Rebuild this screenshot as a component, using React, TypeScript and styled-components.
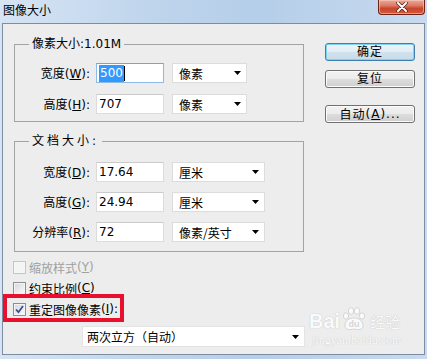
import React from "react";
import styled, { createGlobalStyle } from "styled-components";

const Global = createGlobalStyle`
  html, body { margin: 0; padding: 0; background: #c4d8ee; }
  body {
    font-family: "DejaVu Sans", "Noto Sans CJK SC", sans-serif;
    font-size: 12px;
    color: #000;
  }
`;

const Window = styled.div`
  width: 427px;
  height: 359px;
  box-sizing: border-box;
  display: flex;
  flex-direction: column;
  padding: 0 2px 4px 2px;
  overflow: hidden;
  background: linear-gradient(90deg, #d6e4f4 0%, #bfd5ec 35%, #b5cee9 60%, #c7daef 100%);
`;

const TitleBar = styled.div`
  height: 23px;
  flex: none;
  display: flex;
  justify-content: space-between;
  align-items: flex-start;
`;

const Title = styled.div`
  font-family: "Noto Sans CJK SC", sans-serif;
  font-size: 12px;
  line-height: 14px;
  padding: 3px 0 0 1px;
`;

const CloseBtn = styled.div`
  width: 47px;
  height: 15px;
  box-sizing: border-box;
  border: 1px solid #6e2317;
  border-top: none;
  border-radius: 0 0 4px 4px;
  background: linear-gradient(#e9a998 0%, #dd7a63 40%, #c9452b 60%, #d45a3c 100%);
  box-shadow: inset 0 0 0 1px rgba(255, 210, 200, 0.55);
  display: flex;
  align-items: center;
  justify-content: center;
`;

const Client = styled.div`
  flex: 1;
  position: relative;
  display: flex;
  gap: 19px;
  padding: 13px 0 0 11px;
  background: #ededed;
  border: 1px solid #7d8da1;
`;

const LeftCol = styled.div`
  width: 292px;
  display: flex;
  flex-direction: column;
`;

const RightCol = styled.div`
  display: flex;
  flex-direction: column;
  padding-top: 6px;
`;

const Group = styled.fieldset<{ $pt: number; $pb: number; $gap: number }>`
  width: 290px;
  box-sizing: border-box;
  margin: 0;
  border: 1px solid #a3a3a3;
  padding: ${(p) => p.$pt}px 0 ${(p) => p.$pb}px 0;
  display: flex;
  flex-direction: column;
  gap: ${(p) => p.$gap}px;
  & + & {
    margin-top: 12px;
  }
`;

const Legend = styled.legend<{ $spacing?: number }>`
  margin-left: 14px;
  padding: 0 3px;
  font-size: 12px;
  line-height: 14px;
  height: 14px;
  letter-spacing: ${(p) => p.$spacing ?? 0}px;
`;

const Row = styled.div`
  display: flex;
  align-items: center;
  height: 20px;
`;

const Label = styled.div`
  width: 75px;
  text-align: right;
  margin-right: 6px;
  white-space: nowrap;
  line-height: 14px;
`;

const Input = styled.div<{ $w: number; $focus?: boolean }>`
  width: ${(p) => p.$w}px;
  height: 20px;
  box-sizing: border-box;
  background: #fff;
  border: 1px solid ${(p) => (p.$focus ? "#8cbbe6" : "#dcdcdc")};
  border-top-color: ${(p) => (p.$focus ? "#6fa6dc" : "#cbcbcb")};
  padding-left: 2px;
  display: flex;
  align-items: center;
  margin-right: 8px;
  white-space: nowrap;
`;

const Selected = styled.span`
  background: #3399ff;
  color: #fff;
  padding: 1px 1px;
  line-height: 15px;
`;

const Caret = styled.span`
  display: inline-block;
  width: 1px;
  height: 15px;
  background: #000;
`;

const Select = styled.div<{ $w: number }>`
  width: ${(p) => p.$w}px;
  height: 20px;
  box-sizing: border-box;
  background: #fff;
  border: 1px solid #dcdcdc;
  display: flex;
  align-items: center;
  justify-content: space-between;
  padding: 0 4px 0 6px;
  white-space: nowrap;
`;

const Arrow = () => (
  <svg width="8" height="4" viewBox="0 0 8 4">
    <polygon points="0,0 7,0 3.5,4" fill="#000" />
  </svg>
);

const Btn = styled.div<{ $primary?: boolean; $mt: number }>`
  width: 90px;
  height: 18px;
  box-sizing: border-box;
  margin-top: ${(p) => p.$mt}px;
  border: 1px solid ${(p) => (p.$primary ? "#3c7fb1" : "#707070")};
  border-radius: 3px;
  background: ${(p) =>
    p.$primary
      ? "linear-gradient(#eef5fa 0%, #e1ecf4 50%, #d1e2ee 51%, #c7dbea 100%)"
      : "linear-gradient(#f2f2f2 0%, #ebebeb 50%, #dddddd 51%, #cfcfcf 100%)"};
  box-shadow: inset 0 0 0 1px ${(p) => (p.$primary ? "#7fd3f5" : "#fbfbfb")};
  display: flex;
  align-items: center;
  justify-content: center;
  font-size: 12px;
  line-height: 14px;
  letter-spacing: 1px;
`;

const Checks = styled.div`
  display: flex;
  flex-direction: column;
  margin-top: 5px;
`;

const CheckRow = styled.div<{ $disabled?: boolean }>`
  display: flex;
  align-items: center;
  height: 20px;
  margin-left: -1px;
  color: ${(p) => (p.$disabled ? "#a0a0a0" : "#000")};
  & + & {
    margin-top: 1px;
  }
`;

const Box = styled.span<{ $disabled?: boolean }>`
  width: 13px;
  height: 13px;
  box-sizing: border-box;
  border: 1px solid ${(p) => (p.$disabled ? "#c4c4c4" : "#8e8f8f")};
  background: ${(p) =>
    p.$disabled ? "#f4f4f4" : "linear-gradient(135deg, #d4d6da 0%, #f1f1f1 70%, #fafafa 100%)"};
  box-shadow: inset 0 0 0 1px ${(p) => (p.$disabled ? "#f7f7f7" : "#f4f4f4")};
  margin-right: 3px;
  display: flex;
  align-items: center;
  justify-content: center;
`;

const Resample = styled.div`
  margin: 7px 0 0 68px;
  width: 223px;
  height: 21px;
  box-sizing: border-box;
  background: #fff;
  border: 1px solid #e4e4e4;
  display: flex;
  align-items: center;
  justify-content: space-between;
  padding: 0 4px 0 4px;
  font-family: "Noto Sans CJK SC", sans-serif;
`;

const Highlight = styled.div`
  position: absolute;
  left: 0;
  top: 270px;
  width: 121px;
  height: 28px;
  box-sizing: border-box;
  border: 4px solid #e8102c;
  pointer-events: none;
`;

const Watermark = styled.div`
  position: absolute;
  left: 306px;
  top: 283px;
  display: flex;
  flex-direction: column;
  align-items: flex-start;
  color: #fff;
  opacity: 0.75;
`;

const MarkTop = styled.div`
  display: flex;
  align-items: flex-end;
  gap: 1px;
`;

const Bai = styled.span`
  font-family: "Liberation Sans", sans-serif;
  font-weight: bold;
  font-size: 20px;
  line-height: 20px;
  text-shadow: 0 0 1px #bdbdbd, 0 0 1px #bdbdbd;
`;

const Jy = styled.span`
  font-family: "Noto Sans CJK SC", sans-serif;
  font-size: 15px;
  line-height: 18px;
  margin-left: 2px;
  text-shadow: 0 0 1px #bdbdbd, 0 0 1px #bdbdbd;
`;

const MarkUrl = styled.div`
  font-family: "Liberation Serif", serif;
  font-size: 12px;
  line-height: 12px;
  margin-top: 3px;
  margin-left: 3px;
  text-shadow: 0 0 1px #c4c4c4, 0 0 1px #c4c4c4;
`;

const Cjk = styled.span`
  font-family: "Noto Sans CJK SC", sans-serif;
`;

const Paw = () => (
  <svg width="26" height="24" viewBox="0 0 26 24">
    <g fill="#fff" stroke="#c2c2c2" strokeWidth="0.8">
      <ellipse cx="5" cy="9" rx="2.6" ry="3.2" />
      <ellipse cx="10" cy="4" rx="2.6" ry="3.4" />
      <ellipse cx="16" cy="4" rx="2.6" ry="3.4" />
      <ellipse cx="21" cy="9" rx="2.6" ry="3.2" />
      <path d="M4 19 C4 13 9 11 13 11 C17 11 22 13 22 19 C22 23 17 23 13 22 C9 23 4 23 4 19 Z" />
    </g>
    <text x="13" y="20" textAnchor="middle" fontFamily="Liberation Sans, sans-serif" fontWeight="bold" fontSize="9" fill="#d0d0d0">
      du
    </text>
  </svg>
);

const Check = () => (
  <svg width="9" height="9" viewBox="0 0 9 9">
    <path d="M1 4.5 L3.5 7.2 L8 1" fill="none" stroke="#3b4f8a" strokeWidth="1.8" />
  </svg>
);

const CloseX = () => (
  <svg width="12" height="10" viewBox="0 0 12 10">
    <path d="M2 1 L10 9 M10 1 L2 9" stroke="#5a1a10" strokeWidth="3.4" strokeLinecap="round" />
    <path d="M2 1 L10 9 M10 1 L2 9" stroke="#ffffff" strokeWidth="2" strokeLinecap="round" />
  </svg>
);

export default function App() {
  return (
    <>
      <Global />
      <Window>
        <TitleBar>
          <Title>图像大小</Title>
          <CloseBtn>
            <CloseX />
          </CloseBtn>
        </TitleBar>
        <Client>
          <LeftCol>
            <Group $pt={12} $pb={7} $gap={11}>
              <Legend>像素大小:1.01M</Legend>
              <Row>
                <Label>
                  <Cjk>宽度</Cjk>(<u>W</u>):
                </Label>
                <Input $w={68} $focus>
                  <Selected>500</Selected>
                  <Caret />
                </Input>
                <Select $w={75}>
                  <Cjk>像素</Cjk>
                  <Arrow />
                </Select>
              </Row>
              <Row>
                <Label>
                  <Cjk>高度</Cjk>(<u>H</u>):
                </Label>
                <Input $w={68}>707</Input>
                <Select $w={75}>
                  <Cjk>像素</Cjk>
                  <Arrow />
                </Select>
              </Row>
            </Group>
            <Group $pt={14} $pb={9} $gap={10}>
              <Legend $spacing={3}>文档大小:</Legend>
              <Row>
                <Label>
                  <Cjk>宽度</Cjk>(<u>D</u>):
                </Label>
                <Input $w={68}>17.64</Input>
                <Select $w={93}>
                  <Cjk>厘米</Cjk>
                  <Arrow />
                </Select>
              </Row>
              <Row>
                <Label>
                  <Cjk>高度</Cjk>(<u>G</u>):
                </Label>
                <Input $w={68}>24.94</Input>
                <Select $w={93}>
                  <Cjk>厘米</Cjk>
                  <Arrow />
                </Select>
              </Row>
              <Row>
                <Label>
                  <Cjk>分辨率</Cjk>(<u>R</u>):
                </Label>
                <Input $w={68}>72</Input>
                <Select $w={93}>
                  <Cjk>像素/英寸</Cjk>
                  <Arrow />
                </Select>
              </Row>
            </Group>
            <Checks>
              <CheckRow $disabled>
                <Box $disabled />
                <Cjk>缩放样式</Cjk>(<u>Y</u>)
              </CheckRow>
              <CheckRow>
                <Box />
                <Cjk>约束比例</Cjk>(<u>C</u>)
              </CheckRow>
              <CheckRow>
                <Box>
                  <Check />
                </Box>
                <Cjk>重定图像像素</Cjk>(<u>I</u>):
              </CheckRow>
            </Checks>
            <Resample>
              <span>两次立方（自动）</span>
              <Arrow />
            </Resample>
          </LeftCol>
          <RightCol>
            <Btn $primary $mt={0}>确定</Btn>
            <Btn $mt={9}>复位</Btn>
            <Btn $mt={17}>
              <Cjk>自动</Cjk>(<u>A</u>)...
            </Btn>
          </RightCol>
          <Highlight />
          <Watermark>
            <MarkTop>
              <Bai>Bai</Bai>
              <Paw />
              <Jy>经验</Jy>
            </MarkTop>
            <MarkUrl>jingyan.baidu.com</MarkUrl>
          </Watermark>
        </Client>
      </Window>
    </>
  );
}
